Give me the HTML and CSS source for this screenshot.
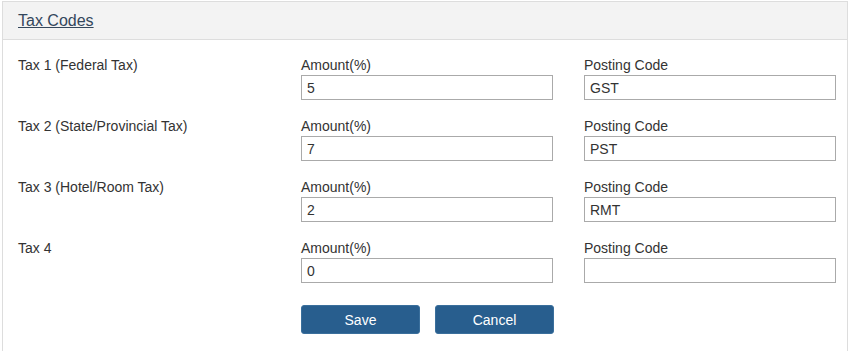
FILE: index.html
```html
<!DOCTYPE html>
<html lang="en">
<head>
  <meta charset="UTF-8">
  <title>Tax Codes</title>
  <link rel="stylesheet" href="styles.css">
</head>
<body>
  <div class="panel">
    <div class="panel-heading">
      <a href="#" class="panel-title">Tax Codes</a>
    </div>
    <form class="panel-body">
      <div class="tax-row">
        <div class="tax-name">Tax 1 (Federal Tax)</div>
        <div class="field">
          <label>Amount(%)</label>
          <input type="text" value="5">
        </div>
        <div class="field">
          <label>Posting Code</label>
          <input type="text" value="GST">
        </div>
      </div>
      <div class="tax-row">
        <div class="tax-name">Tax 2 (State/Provincial Tax)</div>
        <div class="field">
          <label>Amount(%)</label>
          <input type="text" value="7">
        </div>
        <div class="field">
          <label>Posting Code</label>
          <input type="text" value="PST">
        </div>
      </div>
      <div class="tax-row">
        <div class="tax-name">Tax 3 (Hotel/Room Tax)</div>
        <div class="field">
          <label>Amount(%)</label>
          <input type="text" value="2">
        </div>
        <div class="field">
          <label>Posting Code</label>
          <input type="text" value="RMT">
        </div>
      </div>
      <div class="tax-row">
        <div class="tax-name">Tax 4</div>
        <div class="field">
          <label>Amount(%)</label>
          <input type="text" value="0">
        </div>
        <div class="field">
          <label>Posting Code</label>
          <input type="text" value="">
        </div>
      </div>
      <div class="actions">
        <button type="submit" class="btn">Save</button>
        <button type="button" class="btn">Cancel</button>
      </div>
    </form>
  </div>
</body>
</html>
```
FILE: styles.css
```css
body { margin: 0; padding: 1px 1px 0 2px; font-family: "Liberation Sans", Arial, sans-serif; font-size: 14px; color: #333; background: #fff; }
.panel { border: 1px solid #ddd; border-bottom: none; min-height: 360px; }
.panel-heading { background: #f3f3f3; border-bottom: 1px solid #ddd; height: 37px; padding: 0 15px; display: flex; align-items: center; }
.panel-title { font-size: 16px; color: #34475c; text-decoration: underline; }
.panel-body { padding: 15px 0 0 15px; margin: 0; }
.tax-row { display: grid; grid-template-columns: 283px 283px 252px; height: 61px; line-height: 20px; }
.field label { display: block; height: 20px; }
.field input { display: block; box-sizing: border-box; width: 252px; height: 25px; border: 1px solid #aaa; padding: 0 5px; font: inherit; color: #333; margin: 0; }
.actions { display: flex; gap: 15px; padding: 6px 0 0 283px; }
.btn { width: 119px; height: 29px; background: #285e8e; border: 1px solid #3a6f9c; border-radius: 3px; color: #fff; font: inherit; font-size: 14px; }
```
